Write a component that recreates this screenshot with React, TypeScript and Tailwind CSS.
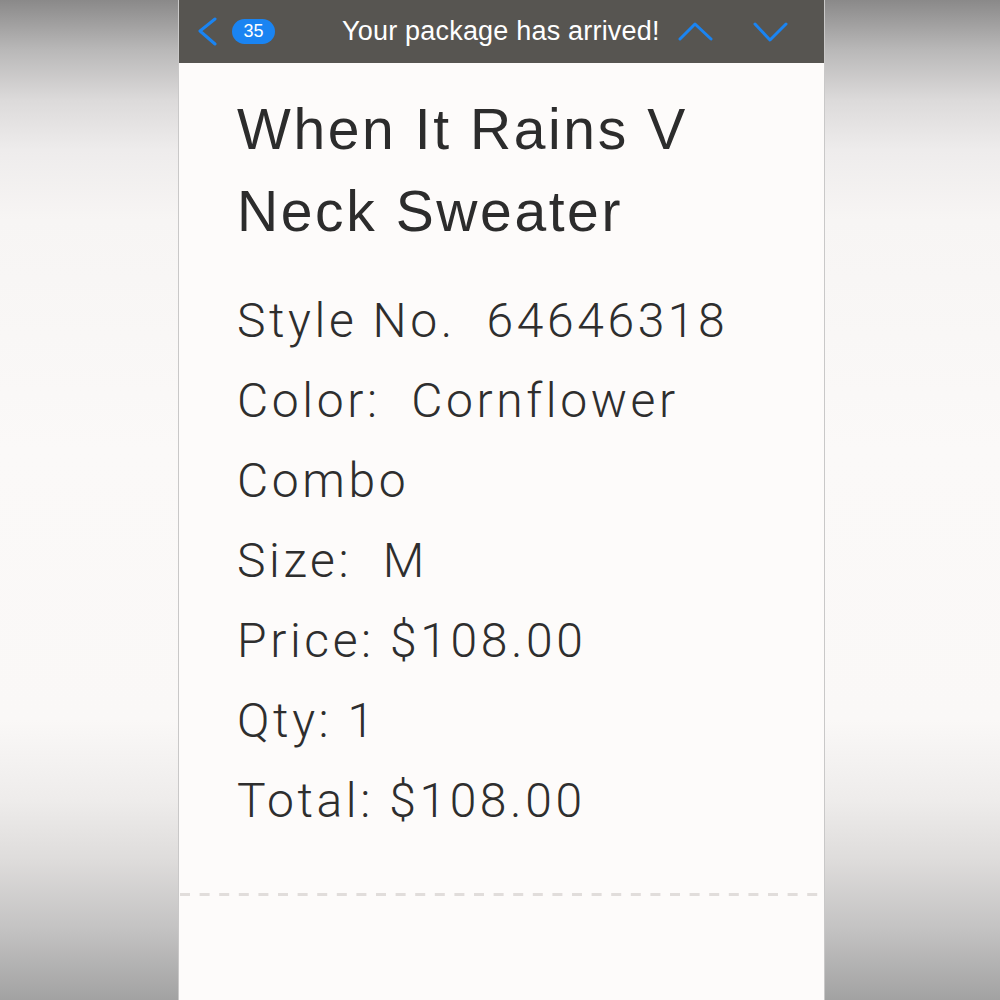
import React from 'react';

const sideBg =
  'h-full bg-[linear-gradient(to_bottom,#8a8989_0%,#b9b8b8_5%,#dcdada_10%,#eeecec_15%,#f7f5f4_22%,#fbf9f8_45%,#faf8f7_72%,#eeeceb_80%,#dedcdb_86%,#c3c2c2_93%,#a2a2a2_100%)]';

const TopBar: React.FC = () => (
  <div className="h-[63px] bg-[#575551] flex items-center shrink-0">
    <svg className="ml-[19px] w-[20px] h-[30px]" viewBox="0 0 20 30" fill="none">
      <path d="M17 2 L2 14 L17 27" stroke="#1a84f2" strokeWidth="3" strokeLinecap="round" strokeLinejoin="round" />
    </svg>
    <div className="ml-[14px] w-[43px] h-[25px] rounded-full bg-[#1a84f2] flex items-center justify-center text-white text-[18px] font-['Liberation_Sans',sans-serif]">
      35
    </div>
    <div className="ml-[67px] w-[320px] text-white text-[27px] tracking-[0.2px] font-['Liberation_Sans',sans-serif] whitespace-nowrap">
      Your package has arrived!
    </div>
    <svg className="ml-[16px] w-[36px] h-[20px]" viewBox="0 0 36 20" fill="none">
      <path d="M2 17 L17 2 L33 17" stroke="#1a84f2" strokeWidth="3" strokeLinecap="round" strokeLinejoin="round" />
    </svg>
    <svg className="ml-[39px] w-[36px] h-[20px]" viewBox="0 0 36 20" fill="none">
      <path d="M2 2 L17 18 L33 2" stroke="#1a84f2" strokeWidth="3" strokeLinecap="round" strokeLinejoin="round" />
    </svg>
  </div>
);

const details = [
  'Style No.\u00a0\u00a064646318',
  'Color:\u00a0\u00a0Cornflower Combo',
  'Size:\u00a0\u00a0M',
  'Price: $108.00',
  'Qty: 1',
  'Total: $108.00',
];

export default function App() {
  return (
    <div className="w-[1000px] h-[1000px] flex overflow-hidden bg-[#f9f7f6]">
      <div className={`w-[179px] border-r border-[#c9c8c8] ${sideBg}`} />
      <div className="w-[645px] h-full flex flex-col bg-[#fdfbfa]">
        <TopBar />
        <div className="pl-[58px] pr-[40px] pt-[25px]">
          <h1 className="text-[57px] leading-[82px] tracking-[2.6px] text-[#2c2c2c] font-['Liberation_Sans',sans-serif]">
            When It Rains V Neck Sweater
          </h1>
          <div className="mt-[29px] text-[48px] leading-[80px] tracking-[3.6px] font-light text-[#2e2e2e] font-['Roboto',sans-serif]">
            {details.map((d) => (
              <p key={d}>{d}</p>
            ))}
          </div>
        </div>
        <svg className="mt-[52px] ml-[1px] w-[640px] h-[3px]" viewBox="0 0 640 3">
          <line x1="0" y1="1.5" x2="640" y2="1.5" stroke="#e1dddb" strokeWidth="3" strokeDasharray="10 9.6" />
        </svg>
      </div>
      <div className={`w-[176px] border-l border-[#c9c8c8] ${sideBg}`} />
    </div>
  );
}
